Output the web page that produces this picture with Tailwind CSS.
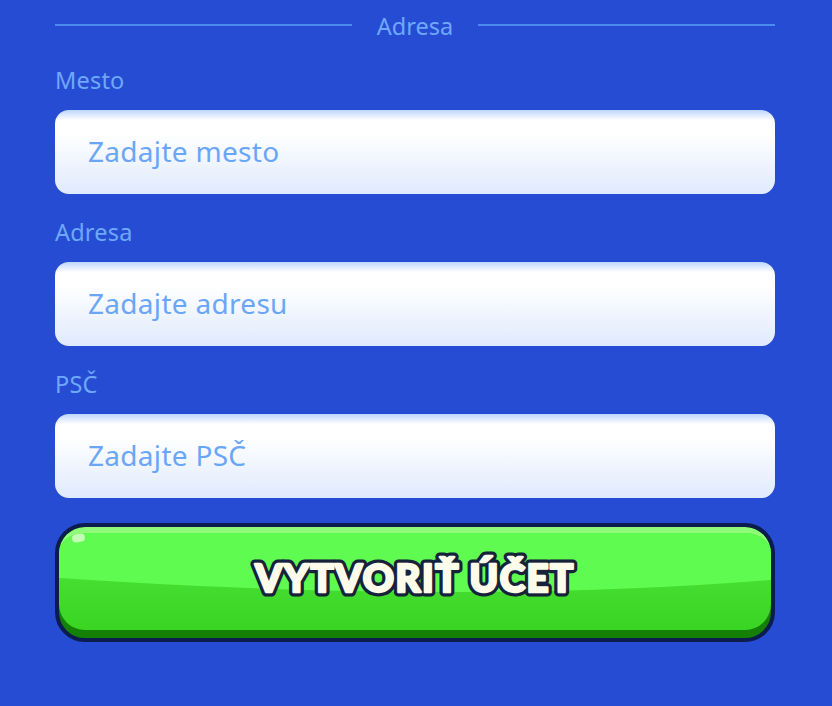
<!DOCTYPE html>
<html lang="sk">
  <head>
    <meta charset="UTF-8" />
    <title>Adresa</title>
    <script src="https://cdn.jsdelivr.net/npm/@tailwindcss/browser@4"></script>
  </head>
  <body class="bg-[#264cd3] font-['Noto_Sans',sans-serif]">
    <div class="w-[720px] h-[706px] overflow-hidden ml-[55px]">
      <div class="flex items-center h-[50px]">
        <div class="flex-1 h-[2px] bg-[#4a8bee]"></div>
        <span class="w-[126px] pt-[3px] text-center text-[23.5px] leading-none text-[#6ea8fb]">Adresa</span>
        <div class="flex-1 h-[2px] bg-[#4a8bee]"></div>
      </div>

      <label class="block mt-[15px] h-[30px] text-[23.5px] leading-[30px] tracking-[0.2px] text-[#6ea8fb]">Mesto</label>
      <input
        placeholder="Zadajte mesto"
        class="block w-full h-[84px] mt-[15px] pl-[33px] pb-[3px] rounded-[14px] text-[28px] tracking-[0.3px] bg-[linear-gradient(#bcd6fb_0%,#fff_12%,#fff_28%,#dfeafd_100%)] placeholder:text-[#6aa6f8] outline-none"
      />

      <label class="block mt-[23px] h-[30px] text-[23.5px] leading-[30px] tracking-[0.2px] text-[#6ea8fb]">Adresa</label>
      <input
        placeholder="Zadajte adresu"
        class="block w-full h-[84px] mt-[15px] pl-[33px] pb-[3px] rounded-[14px] text-[28px] tracking-[0.3px] bg-[linear-gradient(#bcd6fb_0%,#fff_12%,#fff_28%,#dfeafd_100%)] placeholder:text-[#6aa6f8] outline-none"
      />

      <label class="block mt-[23px] h-[30px] text-[23.5px] leading-[30px] tracking-[0.2px] text-[#6ea8fb]">PSČ</label>
      <input
        placeholder="Zadajte PSČ"
        class="block w-full h-[84px] mt-[15px] pl-[33px] pb-[3px] rounded-[14px] text-[28px] tracking-[0.3px] bg-[linear-gradient(#bcd6fb_0%,#fff_12%,#fff_28%,#dfeafd_100%)] placeholder:text-[#6aa6f8] outline-none"
      />

      <button class="relative block w-full h-[119px] mt-[25px] rounded-[30px] border-[4px] border-[#0c1c4e] bg-[#148006] overflow-hidden">
        <span class="absolute inset-x-0 top-0 h-[103px] rounded-[26px] overflow-hidden bg-gradient-to-b from-[#4fe83c] to-[#3ad423] border-t-[6px] border-[#8ffb78]">
          <svg class="absolute left-0 top-0 w-full h-[64px]" viewBox="0 0 712 64" preserveAspectRatio="none">
            <path d="M0 0H712V47Q400 72 0 45Z" fill="#5ffb50" />
          </svg>
        </span>
        <span class="absolute left-[13px] top-[7px] w-[13px] h-[8px] rounded-full bg-[#c5fdb8] -rotate-12"></span>
        <svg class="absolute left-0 top-0 w-[712px] h-[111px]" viewBox="0 0 712 111" font-family="Lato, sans-serif" font-weight="900" font-size="38.5" letter-spacing="1.5" text-anchor="middle" stroke-linejoin="round">
          <text aria-hidden="true" x="356" y="65" fill="#16213a" stroke="#16213a" stroke-width="9">VYTVORIŤ ÚČET</text>
          <text x="356" y="65" fill="#fdfbe9" stroke="#fdfbe9" stroke-width="2.5">VYTVORIŤ ÚČET</text>
        </svg>
      </button>
    </div>
  </body>
</html>
